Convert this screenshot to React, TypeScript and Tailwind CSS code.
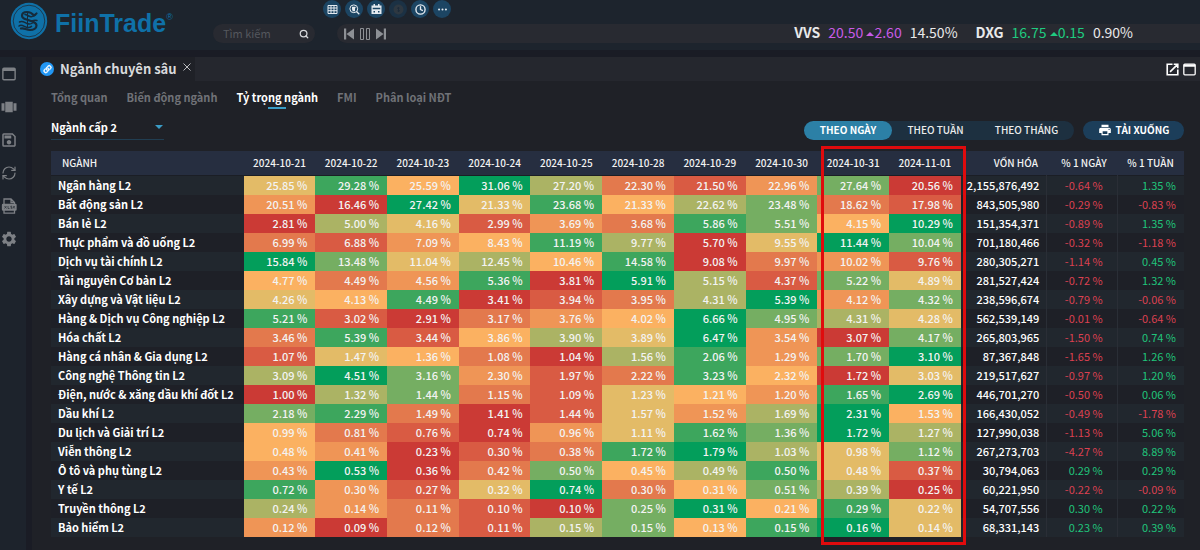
import type { ReactNode } from "react";

import clsx from "clsx";
import { BsLink45Deg, BsThreeDots } from "react-icons/bs";
import { FiSearch } from "react-icons/fi";
import { LuClock4, LuRefreshCw } from "react-icons/lu";
import { MdOutlineSave, MdPrint, MdSettings, MdViewCarousel } from "react-icons/md";

type Sector = {
    name: string;
    // share of turnover for each day
    values: string;
    // heat level for each day, 0 is the lowest
    levels: string;
    cap: string;
    day: string;
    week: string;
};

const dates = [
    "2024-10-21",
    "2024-10-22",
    "2024-10-23",
    "2024-10-24",
    "2024-10-25",
    "2024-10-28",
    "2024-10-29",
    "2024-10-30",
    "2024-10-31",
    "2024-11-01",
];

const heat = [
    "bg-[#cb3a35]",
    "bg-[#d95b43]",
    "bg-[#e3794d]",
    "bg-[#ef9556]",
    "bg-[#fbb161]",
    "bg-[#e3bb67]",
    "bg-[#abb364]",
    "bg-[#75ae62]",
    "bg-[#3da65d]",
    "bg-[#039e5b]",
];

const sectors: Sector[] = [
    { name: "Ngân hàng L2", values: "25.85 29.28 25.59 31.06 27.20 22.30 21.50 22.96 27.64 20.56", levels: "5849621370", cap: "2,155,876,492", day: "-0.64", week: "1.35" },
    { name: "Bất động sản L2", values: "20.51 16.46 27.42 21.33 23.68 21.33 22.62 23.48 18.62 17.98", levels: "3095846721", cap: "843,505,980", day: "-0.29", week: "-0.83" },
    { name: "Bán lẻ L2", values: "2.81 5.00 4.16 2.99 3.69 3.68 5.86 5.51 4.15 10.29", levels: "0651328749", cap: "151,354,371", day: "-0.89", week: "1.35" },
    { name: "Thực phẩm và đồ uống L2", values: "6.99 6.88 7.09 8.43 11.19 9.77 5.70 9.55 11.44 10.04", levels: "2134860597", cap: "701,180,466", day: "-0.32", week: "-1.18" },
    { name: "Dịch vụ tài chính L2", values: "15.84 13.48 11.04 12.45 10.46 14.58 9.08 9.97 10.02 9.76", levels: "9756480231", cap: "280,305,271", day: "-1.14", week: "0.45" },
    { name: "Tài nguyên Cơ bản L2", values: "4.77 4.49 4.56 5.36 3.81 5.91 5.15 4.37 5.22 4.89", levels: "4238096175", cap: "281,527,424", day: "-0.72", week: "1.32" },
    { name: "Xây dựng và Vật liệu L2", values: "4.26 4.13 4.49 3.41 3.94 3.95 4.31 5.39 4.12 4.32", levels: "5480126937", cap: "238,596,674", day: "-0.79", week: "-0.06" },
    { name: "Hàng & Dịch vụ Công nghiệp L2", values: "5.21 3.02 2.91 3.17 3.76 4.02 6.66 4.95 4.31 4.28", levels: "8102349765", cap: "562,539,149", day: "-0.01", week: "-0.64" },
    { name: "Hóa chất L2", values: "3.46 5.39 3.44 3.86 3.90 3.89 6.47 3.54 3.07 4.17", levels: "2814659307", cap: "265,803,965", day: "-1.50", week: "0.74" },
    { name: "Hàng cá nhân & Gia dụng L2", values: "1.07 1.47 1.36 1.08 1.04 1.56 2.06 1.29 1.70 3.10", levels: "1542068379", cap: "87,367,848", day: "-1.65", week: "1.26" },
    { name: "Công nghệ Thông tin L2", values: "3.09 4.51 3.16 2.30 1.97 2.22 3.23 2.32 1.72 3.03", levels: "6973128405", cap: "219,517,627", day: "-0.97", week: "1.20" },
    { name: "Điện, nước & xăng dầu khí đốt L2", values: "1.00 1.32 1.44 1.15 1.09 1.23 1.21 1.20 1.65 2.69", levels: "0672154389", cap: "446,701,270", day: "-0.50", week: "0.06" },
    { name: "Dầu khí L2", values: "2.18 2.29 1.49 1.41 1.44 1.57 1.52 1.69 2.31 1.53", levels: "7820153694", cap: "166,430,052", day: "-0.49", week: "-1.78" },
    { name: "Du lịch và Giải trí L2", values: "0.99 0.81 0.76 0.74 0.96 1.11 1.62 1.36 1.72 1.27", levels: "4210358796", cap: "127,990,038", day: "-1.13", week: "5.06" },
    { name: "Viễn thông L2", values: "0.48 0.41 0.23 0.30 0.38 1.72 1.79 1.03 0.98 1.12", levels: "4301289657", cap: "267,273,703", day: "-4.27", week: "8.89" },
    { name: "Ô tô và phụ tùng L2", values: "0.43 0.53 0.36 0.42 0.50 0.45 0.49 0.50 0.48 0.37", levels: "3902746851", cap: "30,794,063", day: "0.29", week: "0.29" },
    { name: "Y tế L2", values: "0.72 0.30 0.27 0.32 0.74 0.30 0.31 0.51 0.39 0.25", levels: "8315924760", cap: "60,221,950", day: "-0.22", week: "-0.09" },
    { name: "Truyền thông L2", values: "0.24 0.14 0.11 0.10 0.10 0.25 0.31 0.21 0.29 0.22", levels: "6321079485", cap: "54,707,556", day: "0.30", week: "0.22" },
    { name: "Bảo hiểm L2", values: "0.12 0.09 0.12 0.11 0.15 0.15 0.13 0.15 0.16 0.14", levels: "3021674895", cap: "68,331,143", day: "0.23", week: "0.39" },
];

const tabs = ["Tổng quan", "Biến động ngành", "Tỷ trọng ngành", "FMI", "Phân loại NĐT"];

const Logo = () => (
    <a href="#" className="flex w-[203px] items-start gap-[7px] pt-0.5 pl-2.5 text-[#0f71a8]">
        <svg viewBox="0 0 38 38" className="size-[38px]" fill="none">
            <circle cx="19" cy="19" r="18.2" fill="#0f71a8" />
            <circle cx="19" cy="19" r="15.800" stroke="#1b3a50" strokeWidth="1" />
            <g stroke="#162b3b" strokeLinecap="round" strokeLinejoin="round">
                <path d="M26.500 11.500 24 13.500c-2-2.500-4.500-3.500-7-3.500-3 0-5 1.500-5 3.700 0 2 2 3 4.500 3.800l6 2c2.500 1 4 2 4 4 0 2.800-3 4.500-6.500 4.500-4 0-6-2.500-9-1.500" strokeWidth="2.200" />
                <path d="M15 12.500c2 .2 3 1.500 5 2s4-.3 5.500-1.500M9.500 20c3-1.500 5 .5 7.500 1.500s4 .5 5.500-.5M9 24c2.500-2 5 .5 7.500 1.200 2 .6 4 0 5-.8M27 18.500c-2-.8-3.500-.3-5 .5" strokeWidth="1.500" />
                <path d="M17.500 11v15" strokeWidth="1" />
            </g>
        </svg>
        <span className="font-[Liberation_Sans] text-[25px] leading-[42px] font-bold">
            FiinTrade<sup className="-top-3 text-[9px] font-normal">®</sup>
        </span>
    </a>
);

const WindowIcon = ({ className }: { className: string }) => (
    <svg viewBox="0 0 16 16" className={className} fill="none" stroke="currentColor" strokeWidth="1.600">
        <rect x="1" y="1.500" width="14" height="13" rx="1.200" />
        <path d="M1 3.200h14" strokeWidth="2.800" />
    </svg>
);

const ToolButton = ({ label, dim, children }: { label: string; dim?: boolean; children: ReactNode }) => (
    <button
        aria-label={label}
        className={clsx(
            "flex size-[18px] items-center justify-center rounded-full text-[11px]",
            dim ? "bg-[#1b3144] text-[#2e3841]" : "bg-[#1c4563] text-[#e4eaf0]",
        )}
    >
        {children}
    </button>
);

const Quote = ({ code, price, change, percent, tone }: { code: string; price: string; change: string; percent: string; tone: string }) => (
    <div className="flex gap-2">
        <b>{code}</b>
        <span className={tone}>
            {price}{" "}
            <svg viewBox="0 0 8 4" className="inline h-1 w-2 align-middle" fill="currentColor">
                <path d="M0 4 4 0l4 4z" />
            </svg>
            {change}
        </span>
        <span>{percent}</span>
    </div>
);

const Header = () => (
    <header className="flex h-[50px] bg-[#1d242d]">
        <Logo />
        <div className="flex flex-1 flex-col">
            <div className="ml-[120px] flex h-6 gap-1">
                <ToolButton label="Bảng">
                    <svg viewBox="0 0 11 11" className="size-[11px]" fill="none" stroke="currentColor">
                        <path d="M1 1.500h9v8H1zM1 4h9M1 6.700h9M4 1v9M7 1v9" />
                    </svg>
                </ToolButton>
                <ToolButton label="Khám phá">
                    <svg viewBox="0 0 11 11" className="size-[11px]" fill="none" stroke="currentColor">
                        <circle cx="4.800" cy="4.800" r="3.900" />
                        <path d="M3 3.500h3.600M3 5h3M3.500 6.500h2.500M7.500 7.500l2.800 2.800" strokeWidth="1.300" />
                    </svg>
                </ToolButton>
                <ToolButton label="Lịch">
                    <svg viewBox="0 0 11 11" className="size-[11px]" fill="currentColor">
                        <path fillRule="evenodd" d="M2.500 0H4v1.500h3V0h1.500v1.500h2V10H.5V1.500h2zM1.700 3.800v1.500h7.600V3.800zM2.500 7v1.500H4V7zM7 7v1.500h1.500V7z" />
                    </svg>
                </ToolButton>
                <ToolButton label="Tiền tệ" dim>
                    <svg viewBox="0 0 11 11" className="size-[11px]" fill="currentColor">
                        <circle cx="5.500" cy="5.500" r="5" />
                        <path d="M5.500 3v5M4 4.200h2.500M4.500 6.800H7" stroke="#1d2c3a" />
                    </svg>
                </ToolButton>
                <ToolButton label="Lịch sử"><LuClock4 strokeWidth={3} /></ToolButton>
                <ToolButton label="Thêm"><BsThreeDots /></ToolButton>
            </div>
            <div className="flex gap-[22px] pl-[10px]">
                <label className="flex h-[19px] w-[102px] items-center rounded-full bg-[#282a31] pr-1.5 pl-2.5">
                    <input
                        aria-label="Tìm kiếm"
                        placeholder="Tìm kiếm"
                        className="w-full min-w-0 text-[11px] outline-none placeholder:text-[#55585e]"
                    />
                    <FiSearch className="size-2.5 shrink-0 text-[#d5d7da]" strokeWidth={3} />
                </label>
                <div className="flex h-[19px] flex-1 items-center justify-between rounded-l-full bg-[#282a31] pr-[67px] pl-[7px]">
                    <div className="flex gap-1.5 text-[#8d9095]">
                        <button aria-label="Trước">
                            <svg viewBox="0 0 10 12" className="h-3 w-2.5" fill="currentColor"><path d="M0 .5h2.200v11H0zM10 .5v11L2.500 6z" /></svg>
                        </button>
                        <button aria-label="Tạm dừng">
                            <svg viewBox="0 0 10 12" className="h-3 w-2.5" fill="none" stroke="currentColor"><path d="M.5.5h3v11h-3zM6.500.5h3v11h-3z" /></svg>
                        </button>
                        <button aria-label="Sau">
                            <svg viewBox="0 0 10 12" className="h-3 w-2.5" fill="currentColor"><path d="M7.800.5H10v11H7.800zM0 .5v11L7.500 6z" /></svg>
                        </button>
                    </div>
                    <div className="flex gap-[18px] pb-0.5 text-sm leading-[17px] text-[#e8e9ea]">
                        <Quote code="VVS" price="20.50" change="2.60" percent="14.50%" tone="text-[#c95be6]" />
                        <Quote code="DXG" price="16.75" change="0.15" percent="0.90%" tone="text-[#1fcb80]" />
                    </div>
                </div>
            </div>
        </div>
    </header>
);

const Sidebar = () => (
    <nav className="flex w-[26px] flex-col items-center gap-[15px] bg-[#1d232c] pt-2 pr-2 text-[18px] text-[#7d8085]">
        <button aria-label="Cửa sổ"><WindowIcon className="size-[18px] p-0.5" /></button>
        <button aria-label="Bố cục"><MdViewCarousel /></button>
        <button aria-label="Lưu"><MdOutlineSave /></button>
        <button aria-label="Làm mới"><LuRefreshCw className="size-[18px] p-px" strokeWidth={1.8} /></button>
        <button aria-label="Xuất Excel">
            <svg viewBox="0 0 18 18" className="size-[18px]" fill="none" stroke="currentColor" strokeWidth="1.300">
                <path d="M4 7V2h7l3.500 3.500V7M4 13v3.200h10.500V13M11 2v3.500h3.500" />
                <rect x="2.500" y="7.500" width="13.500" height="5.500" rx=".6" fill="currentColor" />
                <path d="m4.500 9 2 2.500m0-2.500-2 2.500M8 9v2.500h1.500M12 9.200h-1.200v1H12v1.100h-1.300M13 9l1.800 2.500m0-2.500L13 11.500" stroke="#1d232c" strokeWidth=".6" />
            </svg>
        </button>
        <button aria-label="Cài đặt"><MdSettings /></button>
    </nav>
);

const SectorTable = () => (
    <div className="relative mt-[11px]">
        <table className="w-full table-fixed text-right text-[11px] leading-[19px] whitespace-nowrap text-[#f3f3f3]">
            <colgroup>
                <col className="w-[17%]" />
                {dates.map((date) => (
                    <col key={date} className="w-[6.33%]" />
                ))}
                <col className="w-[7.6%]" />
                <col className="w-[6.2%]" />
                <col className="w-[5.9%]" />
            </colgroup>
            <thead>
                <tr className="h-6 border-b border-[#1b1e25] bg-[#262e40] text-center text-[10px] *:font-medium">
                    <th className="pl-[11px] text-left">NGÀNH</th>
                    {dates.map((date) => (
                        <th key={date}>{date}</th>
                    ))}
                    <th className="pl-6">VỐN HÓA</th>
                    <th className="pl-1">% 1 NGÀY</th>
                    <th>% 1 TUẦN</th>
                </tr>
            </thead>
            <tbody>
                {sectors.map(({ name, values, levels, cap, day, week }) => (
                    <tr key={name} className="h-[19px] odd:bg-[#21272e] even:bg-[#1e2027]">
                        <th className="pl-[7px] text-left font-bold text-white">{name}</th>
                        {values.split(" ").map((value, idx) => (
                            <td key={idx} className={clsx("pr-2 font-medium", heat[Number(levels[idx])])}>
                                {value} %
                            </td>
                        ))}
                        <td className="pr-[7px] font-medium text-white">{cap}</td>
                        <td className={clsx("border-l border-[#2a2e36] pr-3.5", day.startsWith("-") ? "text-[#dc4151]" : "text-[#20c47b]")}>
                            {day} %
                        </td>
                        <td className={clsx("border-l border-[#2a2e36] pr-2", week.startsWith("-") ? "text-[#dc4151]" : "text-[#20c47b]")}>
                            {week} %
                        </td>
                    </tr>
                ))}
            </tbody>
        </table>
        {/* marks the two latest sessions */}
        <div className="pointer-events-none absolute -top-[5px] -bottom-2 left-[68%] w-[12.8%] border-[3px] border-[#e00b0d]" />
    </div>
);

const Panel = () => (
    <main className="flex-1 bg-[#1f2127]">
        <div className="flex h-6 items-center justify-between bg-[#25272e] pr-1">
            <div className="flex h-full w-[163px] items-center gap-1.5 bg-[#1f2127] pl-2">
                <span className="flex size-[14px] items-center justify-center rounded-full bg-[#2196f3] text-[11px] text-white">
                    <BsLink45Deg strokeWidth={1} />
                </span>
                <h1 className="text-[13px] font-bold text-[#d9dadc]">Ngành chuyên sâu</h1>
                <button aria-label="Đóng" className="text-[#b9bbbe]">
                    <svg viewBox="0 0 8 8" className="mb-1 size-2" stroke="currentColor"><path d="m.5.5 7 7m0-7-7 7" /></svg>
                </button>
            </div>
            <div className="flex gap-1 text-white">
                <button aria-label="Mở cửa sổ mới">
                    <svg viewBox="0 0 16 16" className="size-[13px]" fill="none" stroke="currentColor" strokeWidth="2">
                        <path d="M8 1.500H1.500v13h13V8M9.500 1.500h5v5M14 2 5 11" />
                    </svg>
                </button>
                <button aria-label="Phóng to"><WindowIcon className="size-[13px]" /></button>
            </div>
        </div>

        <div className="pr-4 pl-[19px]">
            <div className="flex h-[34px] items-center gap-[19px] text-[11px] font-bold text-[#707277]">
                {tabs.map((tab) => (
                    <button
                        key={tab}
                        className={clsx(
                            "flex h-6 flex-col items-center gap-0.5 pt-1 leading-[15px]",
                            tab === "Tỷ trọng ngành" && "text-white after:h-0.5 after:w-[18px] after:bg-[#3a9cc6]",
                        )}
                    >
                        {tab}
                    </button>
                ))}
            </div>

            <div className="flex h-[25px] items-end justify-between text-[10px] leading-[17px] font-medium text-[#eceded]">
                <label className="relative flex w-[113px] items-center border-b border-[#213e52]">
                    <select aria-label="Cấp ngành" className="h-6 w-full appearance-none text-[11px] font-bold text-white">
                        <option>Ngành cấp 2</option>
                    </select>
                    <svg viewBox="0 0 8 4" className="absolute right-px h-1 w-2" fill="#3a9cc6"><path d="M0 0h8L4 4z" /></svg>
                </label>
                <div className="flex gap-[9px]">
                    <div className="flex rounded-full bg-[#1d3040] *:pb-0.5">
                        <button className="w-[88px] rounded-full bg-[#2c80a6] font-bold text-white">THEO NGÀY</button>
                        <button className="w-[87px]">THEO TUẦN</button>
                        <button className="w-[95px]">THEO THÁNG</button>
                    </div>
                    <button className="flex w-[101px] items-center justify-center gap-1 rounded-full bg-[#1c3e5a] pb-0.5 font-bold text-white">
                        <MdPrint className="size-3.5" />
                        TẢI XUỐNG
                    </button>
                </div>
            </div>

            <SectorTable />
        </div>
    </main>
);

export default function App() {
    return (
        <div className="flex min-h-screen flex-col bg-[#1a1c25] font-['Noto_Sans_CJK_SC','Noto_Sans',sans-serif]">
            <Header />
            <div className="mt-[7px] flex flex-1 gap-1.5">
                <Sidebar />
                <Panel />
            </div>
        </div>
    );
}
